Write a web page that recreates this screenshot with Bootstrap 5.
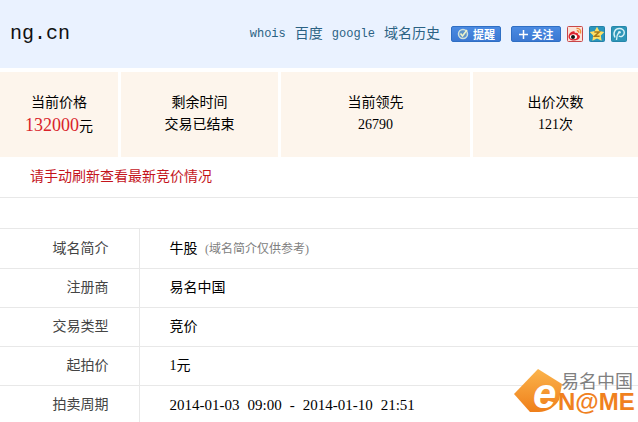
<!DOCTYPE html>
<html lang="zh-CN">
<head>
<meta charset="utf-8">
<meta name="viewport" content="width=device-width, initial-scale=1">
<title>ng.cn</title>
<link href="https://cdn.jsdelivr.net/npm/bootstrap@5.3.0/dist/css/bootstrap.min.css" rel="stylesheet">
<style>
body{font-family:"Liberation Serif","Noto Sans CJK SC",sans-serif;font-size:14px;line-height:22px;color:#000;background:#fff;overflow-x:hidden}
.topbar{background:#eaf2ff;height:68px;padding:0 11px 0 10px}
.domain{font:20px/28px "Liberation Mono","Noto Sans CJK SC",monospace;color:#111}
.tools a{color:#2b6284;font-family:"Liberation Mono","Noto Sans CJK SC",monospace;font-size:12px}
.tools a.zh{font-size:14px}
.links{gap:9px}
.pill{width:50px;height:16px;border:1px solid #2f6fc4;border-radius:2px;background:linear-gradient(#4b8be2,#3b78d2);color:#fff;font:bold 11px/14px "Noto Sans CJK SC",sans-serif}
.pills{gap:10px;margin:0 6px 0 11px}
.shares{gap:6px}
.stats{gap:3px;margin-top:4px}
.stat{background:#fdf5ec;padding:20px 0 21px;flex-basis:0}
.stat>div{height:22px}
.s1{flex-grow:118}.s2{flex-grow:157}.s3{flex-grow:189}.s4{flex-grow:165}
.price{font-size:18px;color:#d9232a}
.notice{color:#c4141c;padding:9px 30px;border-bottom:1px solid #e8e8e8}
.info{margin-top:30px;border-top:1px solid #e8e8e8}
.info th,.info td{border-bottom:1px solid #e8e8e8;padding:8px 30px;font-weight:400}
.info tr:first-child>*{padding-top:9px}
.info th{width:139px;text-align:right;color:#444;border-right:1px solid #e8e8e8}
.info td{color:#000}
.hint{font-size:12px;color:#808080}
.num{font-size:15px}
.brand{right:0;top:364px}
</style>
<script src="https://cdn.jsdelivr.net/npm/bootstrap@5.3.0/dist/js/bootstrap.bundle.min.js"></script>
</head>
<body>
<div class="position-relative">
<header class="topbar d-flex align-items-center justify-content-between">
  <h1 class="domain m-0">ng.cn</h1>
  <div class="tools d-flex align-items-center">
    <nav class="links d-flex align-items-center">
      <a class="text-decoration-none" href="#">whois</a>
      <a class="text-decoration-none zh" href="#">百度</a>
      <a class="text-decoration-none" href="#">google</a>
      <a class="text-decoration-none zh" href="#">域名历史</a>
    </nav>
    <div class="pills d-flex">
      <button type="button" class="pill p-0 d-flex align-items-center justify-content-center gap-1"><svg width="12" height="12" viewBox="0 0 12 12" aria-hidden="true"><circle cx="6" cy="6" r="4.5" fill="#5d94c9" stroke="#cfe0dc" stroke-width="1.5"/><path d="M3.5 5.500 5.500 8 10 2" fill="none" stroke="#eef3c8" stroke-width="1.600"/></svg>提醒</button>
      <button type="button" class="pill p-0 d-flex align-items-center justify-content-center gap-1"><svg width="9" height="9" viewBox="0 0 9 9" aria-hidden="true"><path d="M4.500 0v9M0 4.500h9" stroke="#fff" stroke-width="1.500"/></svg>关注</button>
    </div>
    <div class="shares d-flex">
      <a class="d-flex" href="#" aria-label="新浪微博"><svg width="16" height="16" viewBox="0 0 16 16"><rect x=".5" y=".5" width="15" height="15" rx="1" fill="#fbe3d8" stroke="#c8474a"/><path d="M1.500 10.500c0-3 4-6.500 6-5 .7.700.2 1.500.2 1.500 2-.8 4 0 3.300 1.500 4 1.500 1.500 6-4 6-3 0-5.500-1.500-5.500-4z" fill="#dc2430"/><ellipse cx="6.500" cy="10.700" rx="3.600" ry="2.500" fill="#fff"/><circle cx="6" cy="10.900" r="2" fill="#111"/><path d="M9.500 2.500c3-.5 5 2 4 5M9.800 4.800c1.500-.2 2.300.8 2 2.200" fill="none" stroke="#ee8a35" stroke-width="1.300"/></svg></a>
      <a class="d-flex" href="#" aria-label="QQ空间"><svg width="16" height="16" viewBox="0 0 16 16"><rect x=".5" y=".5" width="15" height="15" rx="1" fill="#2a96bd" stroke="#2380a8"/><path d="m8 .8 2.300 4.200 5 .9-3.500 3.600.8 5.200L8 12.500l-4.600 2.200.8-5.200L.7 5.900l5-.9z" fill="#ffe066"/><path d="M5.300 6h4.900l-4.600 4.300h5" fill="none" stroke="#a87a18" stroke-width="1.500"/></svg></a>
      <a class="d-flex" href="#" aria-label="腾讯朋友"><svg width="16" height="16" viewBox="0 0 16 16"><rect x=".5" y=".5" width="15" height="15" rx="1" fill="#2e96b8" stroke="#2587aa"/><path d="M4 11.500C1.500 7 4 2.500 8.300 2.500c3 0 5 2 5 4.300 0 3-3.300 4.700-5.500 3.200M5.500 14c0-3 .5-5.500 2.500-8" fill="none" stroke="#d7f0f6" stroke-width="1.400"/><circle cx="8.500" cy="6.300" r="1.300" fill="#d7f0f6"/></svg></a>
    </div>
  </div>
</header>
<main>
<section class="stats d-flex text-center">
  <div class="stat s1"><div>当前价格</div><div><span class="price">132000</span>元</div></div>
  <div class="stat s2"><div>剩余时间</div><div>交易已结束</div></div>
  <div class="stat s3"><div>当前领先</div><div>26790</div></div>
  <div class="stat s4"><div>出价次数</div><div>121次</div></div>
</section>
<p class="notice m-0">请手动刷新查看最新竞价情况</p>
<table class="info w-100">
  <tbody>
  <tr><th scope="row">域名简介</th><td>牛股 <span class="hint ms-1">(域名简介仅供参考)</span></td></tr>
  <tr><th scope="row">注册商</th><td>易名中国</td></tr>
  <tr><th scope="row">交易类型</th><td>竞价</td></tr>
  <tr><th scope="row">起拍价</th><td>1元</td></tr>
  <tr><th scope="row">拍卖周期</th><td><div class="num d-flex gap-2"><span>2014-01-03</span><span>09:00</span><span>-</span><span>2014-01-10</span><span>21:51</span></div></td></tr>
  </tbody>
</table>
</main>
<svg class="brand position-absolute" width="126" height="56" viewBox="0 0 126 56" role="img" aria-label="易名中国 eNAME">
  <defs><linearGradient id="og" x1="0" y1="0" x2="0" y2="1"><stop offset="0" stop-color="#fbb44c"/><stop offset="1" stop-color="#ef7f1a"/></linearGradient></defs>
  <path d="M26 5 50 20 47 36c-4 7-12 12-20 12H18L2 30z" fill="url(#og)"/>
  <text x="21" y="44" font-family="Liberation Sans,sans-serif" font-style="italic" font-weight="700" font-size="42" fill="#fff">e</text>
  <text x="49" y="24" font-family="Noto Sans CJK SC,sans-serif" font-size="18" fill="#808080">易名中国</text>
  <text x="46" y="46" font-family="Liberation Sans,sans-serif" font-weight="700" font-size="24" fill="#f0811e">N@ME</text>
</svg>
</div>
</body>
</html>
